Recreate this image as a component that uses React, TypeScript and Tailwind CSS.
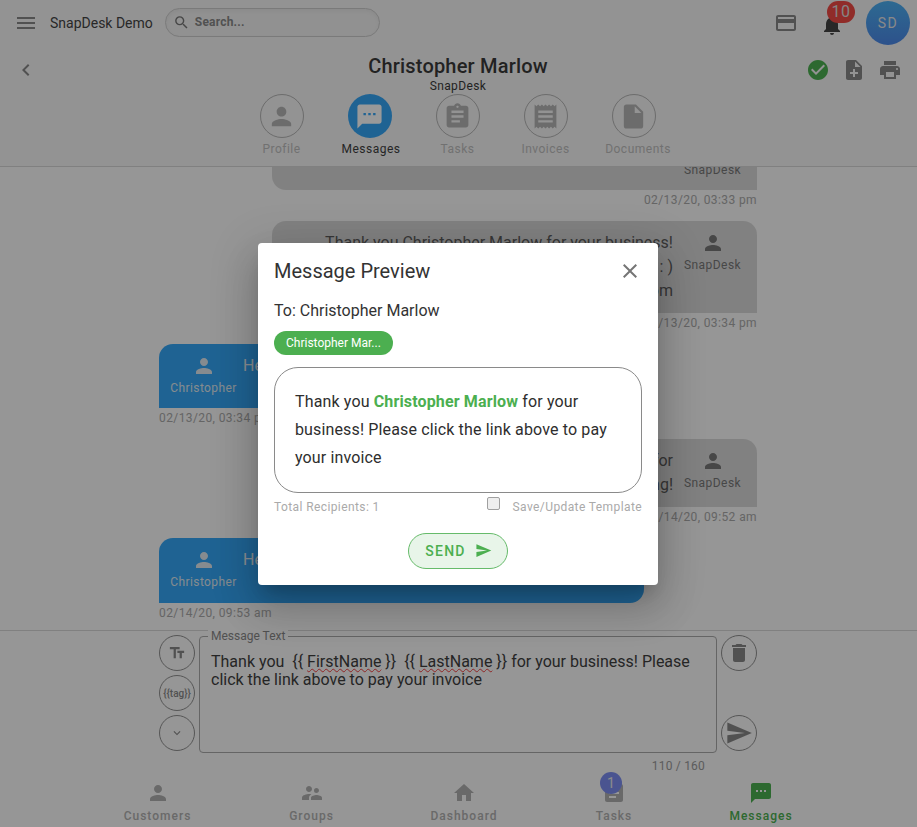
import {
  MdMenu, MdSearch, MdCreditCard, MdNotifications, MdCheckCircle, MdNoteAdd, MdPrint,
  MdChevronLeft, MdPerson, MdSms, MdAssignment, MdReceipt, MdInsertDriveFile, MdClose,
  MdSend, MdTextFields, MdDelete, MdExpandMore, MdSupervisorAccount, MdHome,
} from "react-icons/md";

const tabs = [
  { label: "Profile", Icon: MdPerson },
  { label: "Messages", Icon: MdSms, active: true, nudge: "ml-[3px]" },
  { label: "Tasks", Icon: MdAssignment },
  { label: "Invoices", Icon: MdReceipt },
  { label: "Documents", Icon: MdInsertDriveFile, nudge: "ml-[9px]" },
];

function Stamp({ text, right }: { text: string; right?: boolean }) {
  return (
    <div className={`h-[19px] text-xs leading-[20px] tracking-[0.4px] text-[#a8a8a8] ${right ? "text-right" : ""}`}>
      {text}
    </div>
  );
}

function Theirs({ lines, h, time }: { lines: string[]; h: string; time: string }) {
  return (
    <div className="shrink-0 mt-3 ml-[272px] w-[485px]">
      <div className={`flex justify-end bg-[#d8d8d8] rounded-t-[14px] rounded-bl-[14px] ${h}`}>
        <div className="py-[10px] text-right text-base leading-6 text-[#5c5c5c]">
          {lines.map((l) => <div key={l}>{l}</div>)}
        </div>
        <div className="w-[84px] shrink-0 pr-[5px] flex flex-col items-center pt-[10px] text-xs tracking-[0.45px] text-[#777]">
          <MdPerson size={24} className="text-[#777]" />
          <span className="mt-[2px]">SnapDesk</span>
        </div>
      </div>
      <Stamp text={time} right />
    </div>
  );
}

function Mine({ h, time }: { h: string; time: string }) {
  return (
    <div className="shrink-0 mt-3 ml-[159px] w-[485px]">
      <div className={`flex bg-[#34a5f5] rounded-t-[14px] rounded-br-[14px] ${h}`}>
        <div className="ml-[11px] w-[67px] shrink-0 flex flex-col items-center pt-[10px] text-xs tracking-[0.4px] text-[#dfe8ef]">
          <MdPerson size={24} />
          <span className="mt-[2px]">Christopher</span>
        </div>
        <div className="ml-[6px] pt-[10px] text-base leading-6 text-[#e4ecf2]">Hello, I will pay it today.</div>
      </div>
      <Stamp text={time} />
    </div>
  );
}

function Round({ children }: { children: React.ReactNode }) {
  return (
    <button className="w-9 h-9 rounded-full border border-[#8f8f8f] flex items-center justify-center text-[#888]">
      {children}
    </button>
  );
}

export default function App() {
  return (
    <div className="relative w-[917px] h-[827px] overflow-hidden flex flex-col bg-[#fafafa] font-['Roboto',sans-serif] text-[#3f3f3f]">
      <header className="shrink-0 h-[167px] bg-[#f5f5f5] border-b border-[#d6d6d6]">
        <div className="h-[46px] flex items-center pl-[14px] pr-[7px]">
          <MdMenu size={24} className="text-[#888]" />
          <span className="ml-[12px] text-sm text-[#444]">SnapDesk Demo</span>
          <div className="ml-[12px] mb-[2px] w-[215px] h-[29px] rounded-full border border-[#ccc] bg-[#f2f2f2] flex items-center pl-[7px] shadow-inner">
            <MdSearch size={17} className="text-[#777]" />
            <span className="ml-[5px] text-xs font-bold tracking-[0.2px] text-[#888]">Search...</span>
          </div>
          <div className="ml-auto flex items-center">
            <MdCreditCard size={24} className="text-[#888]" />
            <div className="relative ml-[22px] mr-[22px] mt-[3px]">
              <MdNotifications size={24} className="text-[#444]" />
              <span className="absolute -top-[12px] left-[7px] w-[28px] h-[22px] rounded-full bg-[#f04a45] text-[#ddd] text-base leading-[22px] text-center tracking-[0.5px]">10</span>
            </div>
            <div className="w-11 h-11 rounded-full bg-gradient-to-b from-[#4cb0f2] to-[#4c88e8] flex items-center justify-center text-sm tracking-[1.5px] text-[#e4e4e4]">SD</div>
          </div>
        </div>
        <div className="grid grid-cols-[1fr_auto_1fr] h-[48px] pl-[14px] pr-[15px]">
          <div className="pt-[12px]"><MdChevronLeft size={24} className="text-[#888]" /></div>
          <div className="text-center pt-[8px]">
            <div className="text-xl font-medium leading-[24px] tracking-[0.2px] text-[#3a3a3a]">Christopher Marlow</div>
            <div className="text-xs leading-[16px] tracking-[0.4px] text-[#3a3a3a]">SnapDesk</div>
          </div>
          <div className="flex justify-end gap-[12px] pt-[12px]">
            <MdCheckCircle size={24} className="text-[#4caf50]" />
            <MdNoteAdd size={24} className="text-[#888]" />
            <MdPrint size={24} className="text-[#888]" />
          </div>
        </div>
        <div className="flex justify-center pr-[2px]">
          {tabs.map(({ label, Icon, active, nudge }) => (
            <div key={label} className="w-[88px] flex flex-col items-center">
              <div className={`w-11 h-11 rounded-full flex items-center justify-center ${active ? "bg-[#34a5f5] text-white" : "border border-[#b4b4b4] text-[#b4b4b4]"}`}>
                <Icon size={29} />
              </div>
              <span className={`mt-[3px] text-xs leading-[16px] tracking-[0.5px] ${nudge ?? ""} ${active ? "text-[#3f3f3f]" : "text-[#bdbdbd]"}`}>{label}</span>
            </div>
          ))}
        </div>
      </header>

      <main className="flex-1 min-h-0 overflow-hidden flex flex-col justify-end pb-[8px]">
        <Theirs lines={[]} h="h-[64px]" time="02/13/20, 03:33 pm" />
        <Theirs
          lines={["Thank you Christopher Marlow for your business!", "Please click the link above to pay : )", "www.snapdesk.com"]}
          h="h-[92px]"
          time="02/13/20, 03:34 pm"
        />
        <Mine h="h-[64px]" time="02/13/20, 03:34 pm" />
        <Theirs lines={["We appreciate you, thanks for", "choosing us and for visiting!"]} h="h-[68px]" time="02/14/20, 09:52 am" />
        <Mine h="h-[65px]" time="02/14/20, 09:53 am" />
      </main>

      <section className="shrink-0 h-[144px] border-t border-[#d6d6d6] pt-[4px] pl-[159px]">
        <div className="flex gap-1">
          <div className="flex flex-col gap-1">
            <Round><MdTextFields size={18} /></Round>
            <Round><span className="text-[10px] font-medium">{"{{tag}}"}</span></Round>
            <Round><MdExpandMore size={14} /></Round>
          </div>
          <div className="relative mt-px w-[518px] h-[117px] rounded border border-[#a8a8a8] px-[11px] pt-4 text-base leading-[18.4px] text-[#3f3f3f] whitespace-pre-wrap">
            <span className="absolute -top-[8px] left-[8px] bg-[#fafafa] px-[3px] text-xs leading-[14px] text-[#888]">Message Text</span>
            {"Thank you  {{ "}
            <span className="underline decoration-wavy decoration-1 decoration-[#f04040]">FirstName</span>
            {" }}  {{ "}
            <span className="underline decoration-wavy decoration-1 decoration-[#f04040]">LastName</span>
            {" }} for your business! Please click the link above to pay your invoice"}
          </div>
          <div className="flex flex-col justify-between h-[116px]">
            <Round><MdDelete size={24} /></Round>
            <Round><MdSend size={28} /></Round>
          </div>
        </div>
        <div className="w-[546px] text-right text-xs tracking-[0.2px] text-[#999] mt-[5px]">110 / 160</div>
      </section>

      <nav className="shrink-0 h-[53px] flex pl-[80px] text-xs font-medium tracking-[1px] text-[#b0b0b0]">
        {[
          { label: "Customers", Icon: MdPerson, w: "w-[155px]" },
          { label: "Groups", Icon: MdSupervisorAccount, w: "w-[153px]" },
          { label: "Dashboard", Icon: MdHome, w: "w-[152px]" },
          { label: "Tasks", Icon: MdAssignment, w: "w-[148px]", badge: "1" },
          { label: "Messages", Icon: MdSms, w: "w-[146px]", on: true },
        ].map(({ label, Icon, w, badge, on }) => (
          <div key={label} className={`${w} flex flex-col items-center pt-[7px] ${on ? "text-[#4caf50]" : ""}`}>
            <div className="relative">
              <Icon size={24} />
              {badge && (
                <span className="absolute -top-[9px] -left-[2px] w-[22px] h-[22px] rounded-full bg-[#7c8df0] text-[#e8e8e8] text-sm font-normal tracking-normal leading-[22px] text-center">{badge}</span>
              )}
            </div>
            <span className="mt-[3px] leading-[16px]">{label}</span>
          </div>
        ))}
      </nav>

      <div className="absolute inset-0 pr-px bg-black/40 flex items-center justify-center">
        <div className="w-[400px] h-[342px] bg-white rounded p-4 text-[#333] shadow-[0_11px_15px_-7px_rgba(0,0,0,.2),0_24px_38px_3px_rgba(0,0,0,.14),0_9px_46px_8px_rgba(0,0,0,.12)]">
          <div className="flex items-center justify-between h-6">
            <h2 className="text-xl leading-6">Message Preview</h2>
            <MdClose size={24} className="text-[#757575]" />
          </div>
          <div className="mt-[18px] text-base leading-5">To: Christopher Marlow</div>
          <span className="mt-[10px] inline-flex items-center h-6 px-3 rounded-full bg-[#4caf50] text-xs text-white">Christopher Mar...</span>
          <div className="mt-3 h-[126px] rounded-[24px] border border-[#8a8a8a] pl-5 pr-4 pt-5 text-base leading-7 tracking-[0.14px] text-[#2e2e2e]">
            Thank you <b className="font-bold text-[#4caf50]">Christopher Marlow</b> for your business! Please click the link above to pay your invoice
          </div>
          <div className="mt-[4px] flex items-center text-xs tracking-[0.4px] text-[#aaa] h-5">
            <span>Total Recipients: 1</span>
            <input type="checkbox" disabled className="appearance-none ml-auto mb-[6px] w-[13px] h-[13px] rounded-[2px] border border-[#a0a0a0] bg-[#eeeeee]" />
            <span className="ml-[13px]">Save/Update Template</span>
          </div>
          <div className="mt-4 flex justify-center">
            <button className="w-[100px] h-9 pl-px rounded-full border border-[#66bb6a] bg-[#e8f5e9] flex items-center justify-center gap-[9px] text-sm font-medium tracking-[1.25px] text-[#4caf50]">
              SEND
              <MdSend size={17} />
            </button>
          </div>
        </div>
      </div>
    </div>
  );
}
